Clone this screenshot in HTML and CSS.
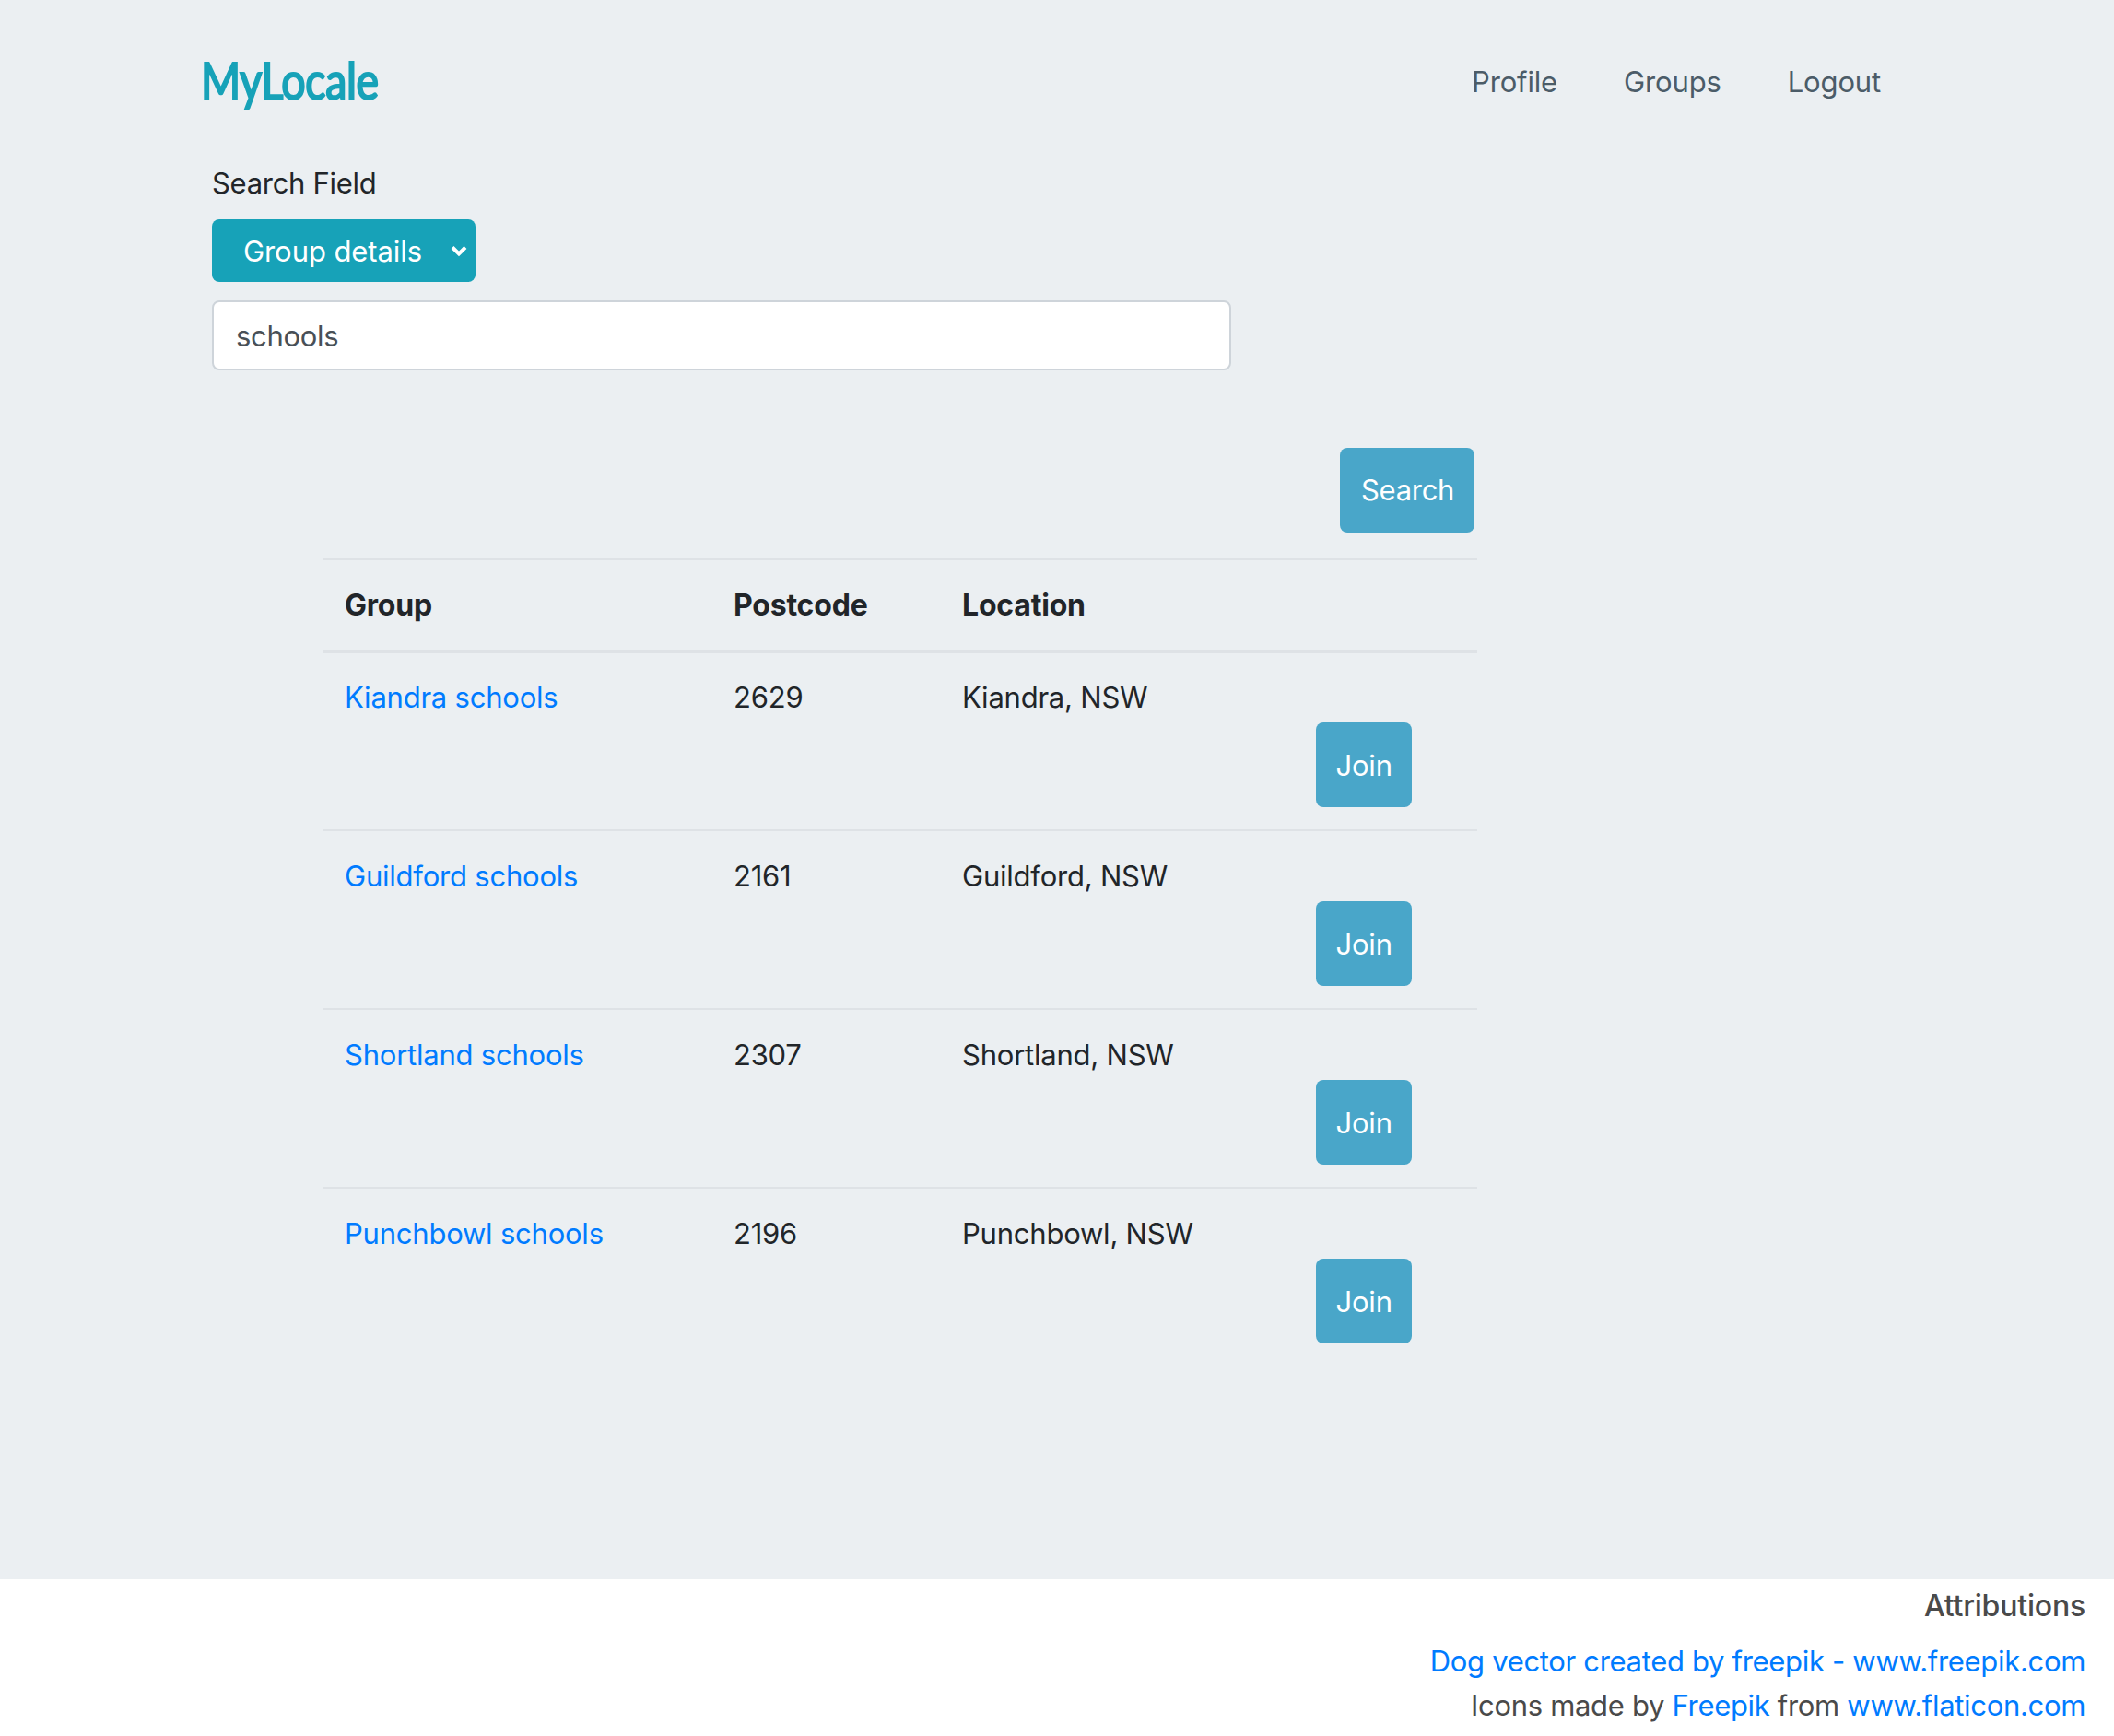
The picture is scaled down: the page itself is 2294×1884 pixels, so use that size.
FILE: index.html
```html
<!DOCTYPE html>
<html lang="en">
<head>
<meta charset="utf-8">
<title>MyLocale</title>
<link rel="stylesheet" href="styles.css">
</head>
<body>
<main class="page">
  <header class="topbar">
    <a class="brand" href="#">MyLocale</a>
    <nav class="nav">
      <a href="#">Profile</a>
      <a href="#">Groups</a>
      <a href="#">Logout</a>
    </nav>
  </header>
  <form class="search-form">
    <label class="field-label">Search Field</label>
    <div class="select-box">
      <span>Group details</span>
      <svg class="chevron" viewBox="0 0 20 14" width="20" height="14"><path d="M3 3.5l7 7 7-7" fill="none" stroke="#fff" stroke-width="4"/></svg>
    </div>
    <input class="text-input" type="text" value="schools">
  </form>
  <section class="results">
    <div class="search-row"><button class="btn btn-search">Search</button></div>
    <table class="table">
      <colgroup><col class="c1"><col class="c2"><col class="c3"><col class="c4"></colgroup>
      <thead><tr><th>Group</th><th>Postcode</th><th>Location</th><th></th></tr></thead>
      <tbody>
        <tr><td><a href="#">Kiandra schools</a></td><td>2629</td><td>Kiandra, NSW</td><td class="action"><button class="btn">Join</button></td></tr>
        <tr><td><a href="#">Guildford schools</a></td><td>2161</td><td>Guildford, NSW</td><td class="action"><button class="btn">Join</button></td></tr>
        <tr><td><a href="#">Shortland schools</a></td><td>2307</td><td>Shortland, NSW</td><td class="action"><button class="btn">Join</button></td></tr>
        <tr><td><a href="#">Punchbowl schools</a></td><td>2196</td><td>Punchbowl, NSW</td><td class="action"><button class="btn">Join</button></td></tr>
      </tbody>
    </table>
  </section>
</main>
<footer class="footer">
  <h6 class="footer-title">Attributions</h6>
  <p class="footer-line"><a href="#">Dog vector created by freepik - www.freepik.com</a></p>
  <p class="footer-line">Icons made by <a href="#">Freepik</a> from <a href="#">www.flaticon.com</a></p>
</footer>
</body>
</html>
```
FILE: styles.css
```css
* { box-sizing: border-box; }
html, body { margin: 0; padding: 0; }
body {
  background: #fff;
  color: #212529;
  font-family: Inter, "Liberation Sans", sans-serif;
  font-size: 31px;
  line-height: 48px;
  letter-spacing: -0.3px;
}
a { color: #007bff; text-decoration: none; }
.page { background: #ebeff2; height: 1714px; overflow: hidden; }
.topbar {
  display: flex;
  justify-content: space-between;
  align-items: center;
  height: 178px;
  padding: 0 253px 0 218px;
}
.brand {
  margin-bottom: 5px;
  color: #17a2b8;
  font-family: Lato, "DejaVu Sans", sans-serif;
  font-weight: 400;
  font-size: 56px;
  letter-spacing: -0.4px;
  -webkit-text-stroke: 2.2px #17a2b8;
  transform: scaleX(0.83);
  transform-origin: left center;
}
.nav { display: flex; gap: 72px; }
.nav a { color: #4b5c68; letter-spacing: -0.15px; }
.search-form { display: flex; flex-direction: column; align-items: flex-start; padding-left: 230px; }
.field-label { height: 60px; margin-top: -3px; }
.select-box {
  display: flex;
  align-items: center;
  justify-content: space-between;
  width: 286px;
  height: 68px;
  margin-top: 3px;
  padding: 2px 8px 0 34px;
  border-radius: 8px;
  background: #17a2b8;
  color: #fff;
  letter-spacing: -0.08px;
}
.chevron { margin-top: -2px; }
.text-input {
  width: 1106px;
  height: 76px;
  margin-top: 20px;
  padding: 0 24px;
  border: 2px solid #ced4da;
  border-radius: 8px;
  background: #fff;
  color: #495057;
  font: inherit;
  letter-spacing: inherit;
}
.results { width: 1252px; margin: 84px 0 0 351px; }
.search-row { display: flex; justify-content: flex-end; padding-right: 3px; height: 120px; }
.btn {
  height: 92px;
  padding: 1px 21.5px 0;
  border: 0;
  border-radius: 8px;
  background: #49a6c9;
  color: #fff;
  font: inherit;
  letter-spacing: inherit;
}
.btn-search { padding: 0 23px; width: 146px; }
.table { width: 100%; border-collapse: collapse; table-layout: fixed; }
.c1 { width: 422px; }
.c2 { width: 248px; }
.c3 { width: 384px; }
.table th, .table td {
  padding: 25px 23px 24px;
  border-top: 2px solid #dee2e6;
  text-align: left;
  vertical-align: top;
}
.table th { height: 100px; font-size: 32px; letter-spacing: -0.2px; font-weight: 700; border-bottom: 4px solid #dee2e6; }
.table td { height: 194px; letter-spacing: -0.22px; }
.table td.action { padding-top: 76px; padding-bottom: 0; }
.table tbody tr:first-child td { padding-top: 24px; }
.table tbody tr:first-child td.action { padding-top: 75px; }
.footer { height: 170px; padding: 0 31px 0 0; text-align: right; color: #4a4a4a; }
.footer-title { margin: 0; padding-top: 5px; height: 65px; font: inherit; font-size: 32px; font-weight: 500; line-height: 48px; letter-spacing: -0.2px; }
.footer-line { margin: 0; letter-spacing: -0.32px; }
```
